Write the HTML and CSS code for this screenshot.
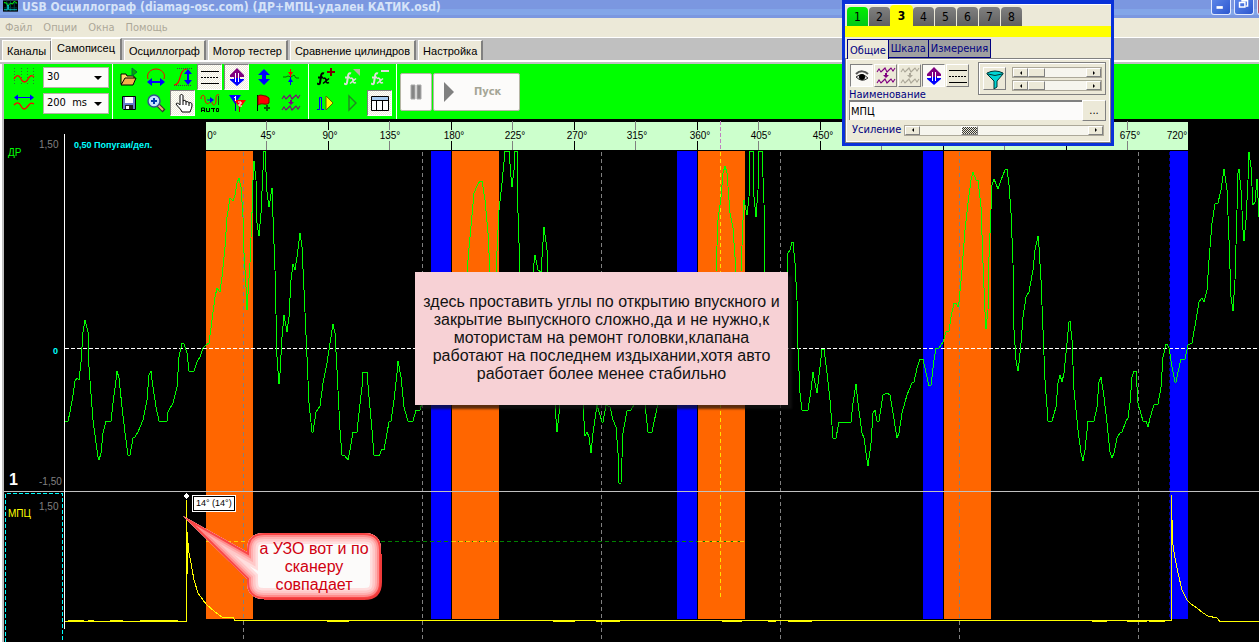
FILE: index.html
```html
<!DOCTYPE html>
<html lang="ru">
<head>
<meta charset="utf-8">
<title>USB Осциллограф</title>
<link rel="stylesheet" href="styles.css">
</head>
<body>
<svg class="defs" aria-hidden="true">
  <symbol id="wave-pair" viewBox="0 0 20 18">
    <path d="M1 5l2-3 2 3 2-2 2-2 2 4 2-2 2-2 2 3 2-3M1 16l2-3 2 3 2-2 2-2 2 4 2-2 2-2 2 3 2-3" fill="none" stroke="currentColor" stroke-width="1.1"/>
    <path d="M9 6h2v2h2l-3 3-3-3h2z" fill="currentColor"/>
  </symbol>
  <symbol id="updown-two" viewBox="0 0 20 20">
    <path d="M10 1l7 7v2h-4v1H7v-1H3V8z" fill="#800080"/>
    <path d="M7 11h6v1h4v1l-7 6-7-6v-1h4z" fill="#0000ff"/>
    <path d="M8.500 6v9M11.500 6v9" stroke="#fff"/>
  </symbol>
  <symbol id="levels" viewBox="0 0 20 20">
    <path d="M1 4.500h18M1 16.500h18" stroke="#000"/>
    <path d="M1 10.500h18" stroke="#000" stroke-dasharray="2 1"/>
  </symbol>
  <symbol id="fx" viewBox="0 0 14 14">
    <path d="M7 2c-2-1-3 1-3 3L3 11c0 2-1 2-3 1M1 6h5" fill="none" stroke="currentColor" stroke-width="2"/>
    <path d="M6 7c2-1 3 0 3 2s1 3 3 2M12 7L6 12" fill="none" stroke="currentColor" stroke-width="1.6"/>
  </symbol>
</svg>

<header class="titlebar">
  <svg class="app-icon" viewBox="0 0 16 12"><path d="M0 0h16v12H0z"/><path d="M1 3h14M1 8h14M4 0v11M8 0v11M12 0v11" stroke="#044"/><path d="M1 2l3 1 1 3 3-3 2 1 2-3 3 2" fill="none" stroke="#0f0"/><path d="M1 10h4V5h1v5h9" fill="none" stroke="#0cc"/></svg>
  <h1 class="title">USB Осциллограф (diamag-osc.com) (ДР+МПЦ-удален КАТИК.osd)</h1>
  <div class="window-controls">
    <button class="win-btn" aria-label="Свернуть"><svg viewBox="0 0 20 16"><path d="M5 7h7v3H5z" fill="#fff"/></svg></button>
    <button class="win-btn" aria-label="Восстановить"><svg viewBox="0 0 20 16"><path d="M5 3h6v5H5zM7 1h7v6h-2" fill="none" stroke="#fff" stroke-width="1.6"/></svg></button>
    <button class="win-btn win-close" aria-label="Закрыть"></button>
  </div>
</header>

<nav class="menubar">
  <button>Файл</button><button>Опции</button><button>Окна</button><button>Помощь</button>
</nav>

<div class="tabs" role="tablist">
  <button role="tab">Каналы</button>
  <button role="tab" class="selected" aria-selected="true">Самописец</button>
  <button role="tab">Осциллограф</button>
  <button role="tab">Мотор тестер</button>
  <button role="tab">Сравнение цилиндров</button>
  <button role="tab">Настройка</button>
</div>

<section class="toolbar">
  <div class="scales">
    <svg viewBox="0 0 24 20" width="24" height="20"><path d="M2.500 1v18M9.500 1v18M15.500 1v18M21.500 1v18" stroke="#2c7a2c" stroke-dasharray="1 2"/><path d="M2 12c3-5 5-4 7 0s5 4 7 0 4-4 6-2" fill="none" stroke="#f00" stroke-width="1.3"/></svg>
    <span class="combo"><select aria-label="Масштаб"><option>30</option></select></span>
    <svg viewBox="0 0 24 20" width="24" height="20"><path d="M3 4.500h18" stroke="#00f"/><path d="M6 1.500l-4 3 4 3zM18 1.500l4 3-4 3z" fill="#00f"/><path d="M2 12c3-3 5-3 7 1s4 4 7 0 4-3 6-2" fill="none" stroke="#f00" stroke-width="1.3"/></svg>
    <span class="combo"><select aria-label="Развёртка"><option>200&nbsp; ms</option></select></span>
  </div>
  <div class="tools tools-main">
    <button aria-label="Открыть"><svg viewBox="0 0 20 20"><path d="M2 17V7h5l1 2h7v3H7z" fill="#ffd76a" stroke="#000"/><path d="M2 18l4-7h11l-3 7z" fill="#f5b04c" stroke="#000"/><path d="M13 1l5 4-5 4z" fill="#0a0" stroke="#064"/></svg></button>
    <button aria-label="Горизонтальный размах"><svg viewBox="0 0 20 20"><path d="M2 12C0 6 5 2 10 2s10 4 8 10" fill="none" stroke="#f00"/><path d="M3 15h14" stroke="#00f" stroke-width="2"/><path d="M6 11l-5 4 5 4zM14 11l5 4-5 4z" fill="#00f"/></svg></button>
    <button aria-label="Вертикальный размах"><svg viewBox="0 0 20 20"><path d="M1 18c8 0 4-16 13-16" fill="none" stroke="#f00" stroke-width="1.2"/><path d="M4 1.500h16M1 18.500h18" stroke="#444" stroke-dasharray="1 1"/><path d="M15 5v10" stroke="#00f" stroke-width="2"/><path d="M11 7l4-5 4 5zM11 13l4 5 4-5z" fill="#00f"/></svg></button>
    <button class="on" aria-label="Уровни"><svg><use href="#levels"/></svg></button>
    <button class="on" aria-label="Смещение"><svg><use href="#updown-two"/></svg></button>
    <button aria-label="Вверх вниз"><svg viewBox="0 0 20 20"><path d="M10 2l6 6h-4v4h4l-6 6-6-6h4V8H4z" fill="#00f"/></svg></button>
    <button aria-label="Сжать"><svg viewBox="0 0 20 20"><path d="M2 10h3l2-1 3 1 3-2 2 3h3" fill="none" stroke="#086808"/><path d="M9.500 2v8" stroke="#f00"/><path d="M9.500 10v8" stroke="#00f"/><path d="M7 5h5l-2.500 4z" fill="#f00"/><path d="M7 15h5l-2.500-4z" fill="#00f"/></svg></button>
    <button aria-label="Сохранить"><svg viewBox="0 0 20 20"><path d="M3.500 3.500h13v13h-12l-1-1z" fill="#667dcc" stroke="#000"/><path d="M6 4h8v6H6z" fill="#fff"/><path d="M6 12h8v4H6z" fill="#222"/><path d="M7 13h3v3H7z" fill="#fff"/></svg></button>
    <button aria-label="Увеличить"><svg viewBox="0 0 20 20"><path d="M12 12l6 6" stroke="#333" stroke-width="4"/><path d="M12 12l5 5" stroke="#e8ae74" stroke-width="2"/><circle cx="8" cy="8" r="6" fill="#c8e6ff" stroke="#33528e" stroke-width="1.5"/><path d="M8 5v6M5 8h6" stroke="#003cae" stroke-width="2"/></svg></button>
    <button class="on" aria-label="Рука"><svg viewBox="0 0 20 20"><path d="M7 12V3c0-2 3-2 3 0v5c1-1 3-1 3 1 1-1 3 0 3 1 2-1 3 0 3 2 0 3-1 4-2 7H9c-1-3-4-5-6-8 1-2 3 0 4 1zM10 8v4M13 9v3M16 10v3" fill="#fff" stroke="#000"/></svg></button>
    <button aria-label="Авто"><svg viewBox="0 0 20 20"><path d="M1 6c0-5 4-5 4 0s3 6 5 3M12 9c0 4 4 4 4-1s0-7 3-6" fill="none" stroke="#f00"/><path d="M7 7h4" stroke="#00f"/><path d="M18.500 3v9" stroke="#075f07"/><path d="M10 4l4 3-4 3z" fill="#00f"/><path d="M1.500 19v-4h3v4M2 17.500h2M6.500 15v3.500h3V15M11 15.500h4M13.500 15v4M16.500 15.500h2v3h-2z" fill="none" stroke="#000"/></svg></button>
    <button aria-label="Маркеры 1 и 2"><svg viewBox="0 0 20 20"><path d="M2 2h12L8 11z" fill="#00f"/><path d="M7 7h12l-6 8z" fill="#f00"/><path d="M8.500 10v8" stroke="#00a"/><path d="M12.500 13v6" stroke="#a00"/><path d="M8.500 3v5M7 4.500h1M11 9h3v2h-2v2h3" fill="none" stroke="#fff"/></svg></button>
    <button aria-label="Добавить метку"><svg viewBox="0 0 20 20"><path d="M3.500 2v16" stroke="#000"/><path d="M4 3c3-2 5 0 8 0l3 2v5c-4 3-6-1-11 2z" fill="#f00" stroke="#700"/><path d="M13 12v6M10 15h6" stroke="#075f07" stroke-width="2"/></svg></button>
    <button class="purple" aria-label="Наложить"><svg><use href="#wave-pair"/></svg></button>
  </div>
  <div class="tools tools-fx">
    <button aria-label="Добавить функцию"><svg viewBox="0 0 20 20"><use href="#fx" x="1" y="4" width="14" height="15"/><path d="M15 1v8M11 5h8" stroke="#700" stroke-width="2"/></svg></button>
    <button class="off" aria-label="Изменить функцию"><svg viewBox="0 0 20 20"><use href="#fx" x="1" y="4" width="14" height="15"/><path d="M10 2h7v7z" fill="#b5b5a4"/></svg></button>
    <button class="off" aria-label="Удалить функцию"><svg viewBox="0 0 20 20"><use href="#fx" x="1" y="4" width="14" height="15"/><path d="M11 4h8" stroke="#dededa" stroke-width="2"/></svg></button>
    <button aria-label="К началу"><svg viewBox="0 0 20 20"><path d="M1 16.500h2.500v-12h2v12H8" fill="none" stroke="#00f"/><path d="M10 3l7 7-7 7z" fill="#ff0" stroke="#660"/></svg></button>
    <button aria-label="Воспроизвести"><svg viewBox="0 0 20 20"><path d="M6 3l7 7-7 7z" fill="none" stroke="#228722" stroke-width="1.4"/></svg></button>
    <button class="on" aria-label="Таблица"><svg viewBox="0 0 20 20"><path d="M1.500 3.500h17v14h-17z" fill="#fff" stroke="#000"/><path d="M2 4h16v3H2z" fill="#a5caef"/><path d="M1 7.500h18M6.500 7v10M12.500 7v10" stroke="#000"/></svg></button>
  </div>
  <div class="run">
    <button class="pause" aria-label="Пауза"><svg viewBox="0 0 12 16" width="12" height="16"><path d="M1 1h4v14H1zM7 1h4v14H7z" fill="#858585" stroke="#aaa"/></svg></button>
    <button class="start"><svg viewBox="0 0 12 20" width="12" height="20"><path d="M1 0l10 10L1 20z" fill="#808080"/></svg><span>Пуск</span></button>
  </div>
</section>

<main class="plot">
  <svg class="scope">
    <g transform="translate(-4 -119)" shape-rendering="crispEdges">
      <path d="M206 122h982v28H206z" fill="#ccffcc"/>
      <path d="M206 151h47v468h-47zM452 151h47v468h-47zM698 151h47v468h-47zM944 151h47v468h-47z" fill="#ff6600"/>
      <path d="M431 151h20v468h-20zM677 151h20v468h-20zM923 151h20v468h-20zM1170 151h18v468h-18z" fill="#0000ff"/>
      <path d="M328.500 122v8m0 11v9M451.500 122v8m0 11v9M574.500 122v8m0 11v9M697.500 122v8m0 11v9M820.500 122v8m0 11v9M943.500 122v28M1066.500 122v28" stroke="#000"/>
      <path d="M266.500 121v9m0 11v9M389.500 121v9m0 11v9M512.500 121v9m0 11v9M635.500 121v9m0 11v9M758.500 121v9m0 11v9M881.500 121v29M1004.500 121v29M1127.500 121v9m0 11v9" stroke="#808080"/>
      <path d="M243.500 152v490M422.500 152v490M601.500 152v490M780.500 152v490M959.500 152v490M1138.500 152v490" stroke="#808080" stroke-dasharray="4 3"/>
      <path d="M1169.500 152v467" stroke="#0000a0" stroke-dasharray="3 3"/>
      <path d="M65 348.500h1900" stroke="#fff" stroke-dasharray="4 2"/>
      <path d="M206 541.500h539" stroke="#008000" stroke-dasharray="4 3"/>
      <path d="M206 541.500h47M452 541.500h47M698 541.500h47" stroke="#ffcc00" stroke-dasharray="4 3"/>
      <path d="M720.500 121v29" stroke="#c080c0" stroke-dasharray="4 2"/>
      <path d="M720.500 152v448" stroke="#ffe000" stroke-dasharray="4 3"/>
      <path d="M4 491.500h1961" stroke="#c0c0c0"/>
      <path d="M64.500 134v495" stroke="#fff"/>
      <path d="M5.500 642V493.500h57V642" fill="none" stroke="#00ffff" stroke-dasharray="4 2"/>
      <polyline fill="none" stroke="#00ff00" points="65,421 68,421 70,412 73,395 75,381 77,378 79,380 81,362 83,332 85,320 88,332 89,367 93,420 96,443 98,457 99,460 101,453 103,433 106,421 111,421 113,403 116,380 117,371 119,378 122,407 125,433 128,455 130,455 133,438 135,437 138,432 143,420 147,400 149,375 151,371 152,380 156,407 159,421 167,421 168,412 173,403 177,387 179,357 182,343 184,344 187,353 189,371 194,371 197,362 200,357 203,348 206,345 209,343 212,320 215,297 217,288 220,292 222,277 225,247 227,217 230,198 233,201 235,195 237,183 239,178 241,187 243,217 244,253 246,287 247,310 250,263 252,213 253,180 254,161 256,180 257,223 259,236 261,213 263,170 264,151 265,151 267,192 269,207 272,188 273,217 275,270 277,357 279,384 280,373 282,337 284,315 287,332 289,317 291,280 293,264 295,270 297,257 300,233 302,247 304,290 307,357 309,403 312,432 313,432 316,412 320,406 323,383 327,363 330,343 333,324 335,333 337,370 340,430 342,455 345,456 348,460 350,450 353,432 357,432 359,413 362,387 363,372 367,372 369,397 372,430 374,455 379,456 382,449 384,450 389,422 391,421 394,400 397,373 398,361 401,377 404,407 408,421 413,421 416,410 420,410 422,403 440,350 462,300 467,272 470,237 474,193 477,186 480,181 482,181 485,200 488,233 490,272 493,300 496,272 499,210 502,183 505,151 509,151 511,177 512,187 514,170 515,151 517,151 518,213 520,272 526,330 533,272 535,255 538,270 541,272 544,227 547,250 548,272 555,405 557,432 560,405 570,360 583,405 585,436 587,432 589,437 591,453 593,433 597,405 602,422 603,422 606,405 610,407 613,420 616,427 618,453 619,483 621,483 623,433 627,411 631,410 634,405 640,370 645,405 648,432 652,432 657,408 670,360 700,320 716,272 718,220 721,197 723,173 725,166 727,173 730,213 733,228 736,272 739,305 741,272 743,220 744,200 747,215 749,197 750,151 753,151 754,197 756,217 758,190 759,151 762,151 764,203 765,272 775,350 787,272 788,253 790,250 792,242 793,242 795,263 797,300 798,348 800,393 802,410 808,410 811,390 813,372 815,383 817,393 820,367 822,349 824,349 827,373 830,400 833,438 836,438 839,422 851,422 853,403 856,384 858,403 862,433 864,438 867,460 868,466 871,443 873,413 875,410 877,421 879,421 883,395 887,393 890,395 893,413 897,438 899,433 902,413 907,395 912,383 914,382 917,368 920,359 923,359 926,373 929,386 931,385 934,360 936,348 939,348 943,342 946,332 949,331 951,317 954,303 956,303 958,307 959,302 962,270 965,230 968,203 971,180 973,172 976,180 978,180 981,207 983,263 985,312 986,329 988,310 989,257 991,210 992,185 994,179 998,189 1001,180 1003,175 1005,170 1007,169 1009,185 1011,213 1013,263 1014,330 1016,360 1018,371 1019,363 1021,343 1023,317 1026,297 1029,292 1033,270 1035,250 1038,236 1039,247 1041,280 1043,330 1045,380 1047,407 1048,421 1052,421 1056,407 1058,383 1060,375 1062,382 1064,373 1067,343 1069,322 1070,321 1072,340 1074,390 1078,430 1081,453 1083,461 1085,450 1088,421 1094,421 1097,407 1099,382 1101,377 1104,397 1107,423 1110,452 1112,458 1114,453 1117,438 1120,433 1122,432 1126,421 1128,418 1130,403 1132,377 1134,371 1136,371 1138,403 1143,421 1146,421 1148,427 1150,418 1154,405 1158,404 1161,387 1163,357 1166,344 1167,344 1169,348 1172,367 1175,382 1176,382 1178,372 1181,359 1185,359 1188,345 1192,343 1196,320 1199,302 1202,298 1204,302 1207,290 1209,260 1212,223 1215,204 1218,203 1221,190 1224,169 1227,190 1229,240 1231,297 1233,311 1235,280 1237,210 1238,173 1239,169 1241,190 1243,230 1244,241 1246,220 1248,180 1249,152 1251,167 1253,205 1255,202 1257,179 1259,217"/>
      <path d="M65 621.500h121V500M187.500 532v42M187 532l2 21 2 10 3 17 4 13 5 7 3 4 9 8 7 5h11l2 3.500h936V495M1171.500 520v50M1172 520l1 25 2 13 3 15 4 17 5 10 4 4 6 4 6 5 5 3 9 2 3 3.500h745" fill="none" stroke="#ffff00"/>
      <path d="M68 620.500h16M88 620.500h6M110 620.500h13M140 620.500h38M327 620.500h22M553 620.500h22M596 620.500h24M722 620.500h20M768 620.500h8M788 620.500h24M1092 620.500h15M1127 620.500h20M1149 620.500h16" stroke="#ffff00" stroke-width="2"/>
      <path d="M186 493l3 3-3 3-3-3z" fill="#fff"/>
    </g>
    <g class="angles" transform="translate(-4 -119)" text-anchor="middle">
      <text x="212" y="139">0°</text><text x="268" y="139">45°</text><text x="330" y="139">90°</text><text x="390" y="139">135°</text><text x="454" y="139">180°</text><text x="515" y="139">225°</text><text x="577" y="139">270°</text><text x="637" y="139">315°</text><text x="700" y="139">360°</text><text x="761" y="139">405°</text><text x="823" y="139">450°</text><text x="1130" y="139">675°</text><text x="1177" y="139">720°</text>
    </g>
    <g class="labels" transform="translate(-4 -119)">
      <text class="green" x="8" y="156">ДР</text>
      <text class="gray" x="39" y="148">1,50</text>
      <text class="cyan" x="74" y="148">0,50 Попугаи/дел.</text>
      <text class="cyan" x="53" y="354">0</text>
      <text class="channel" x="9" y="485">1</text>
      <text class="gray" x="39" y="485">-1,50</text>
      <text class="gray" x="39" y="510">1,50</text>
      <text class="yellow" x="8" y="517">МПЦ</text>
    </g>
  </svg>
  <div class="marker">14° (14°)</div>
  <div class="note">здесь проставить углы по открытию впускного и<br>закрытие выпускного сложно,да и не нужно,к<br>мотористам на ремонт головки,клапана<br>работают на последнем издыхании,хотя авто<br>работает более менее стабильно</div>
  <div class="callout">
    <svg viewBox="0 0 204 90">
      <clipPath id="bubble"><path id="bubble-path" d="M2 2l64 36V36q0-17 17-17h100q17 0 17 17v32q0 17-17 17H83q-17 0-17-17v-3z"/></clipPath>
      <g clip-path="url(#bubble)" fill="none">
        <use href="#bubble-path" fill="#fcfbfa"/>
        <use href="#bubble-path" stroke="#ffdede" stroke-width="22"/>
        <use href="#bubble-path" stroke="#ffc8c8" stroke-width="17"/>
        <use href="#bubble-path" stroke="#ffb0b0" stroke-width="12"/>
        <use href="#bubble-path" stroke="#ff8c8c" stroke-width="8"/>
        <use href="#bubble-path" stroke="#f94646" stroke-width="4"/>
      </g>
      <path d="M200 40v28q0 17-17 17H83" fill="none" stroke="#f03a3a" stroke-width="2"/>
    </svg>
    <p>а УЗО вот и по<br>сканеру<br>совпадает</p>
  </div>
</main>

<aside class="dialog">
  <div class="channels">
    <button class="ch ch-on">1</button><button class="ch">2</button><button class="ch ch-current">3</button><button class="ch">4</button><button class="ch">5</button><button class="ch">6</button><button class="ch">7</button><button class="ch">8</button>
  </div>
  <div class="stripe"></div>
  <div class="subtabs" role="tablist">
    <button role="tab" class="selected" aria-selected="true">Общие</button><button role="tab">Шкала</button><button role="tab">Измерения</button>
  </div>
  <div class="panel">
    <div class="panel-row">
      <div class="panel-tools">
        <button class="pressed" aria-label="Показать"><svg viewBox="0 0 20 20"><path d="M4 8c4-4 9-3 12 0" fill="none" stroke="#555" stroke-width="2"/><path d="M4 11q6-5 12 1-6 5-12-1z" fill="#ddd" stroke="#333"/><circle cx="10" cy="11" r="3"/></svg></button>
        <button class="purple" aria-label="Наложить"><svg><use href="#wave-pair"/></svg></button>
        <button class="muted" aria-label="Разделить"><svg><use href="#wave-pair"/></svg></button>
        <button class="pressed" aria-label="Смещение"><svg><use href="#updown-two"/></svg></button>
        <button aria-label="Уровни"><svg><use href="#levels"/></svg></button>
      </div>
      <div class="filter-box">
        <button aria-label="Фильтр"><svg viewBox="0 0 20 20"><path d="M2 4q8-4 16 0v1l-6 7v6l-3 2v-8L2 5z" fill="#00d5d5" stroke="#033"/><path d="M3 5q7 3 14 0" fill="none" stroke="#033"/></svg></button>
        <div class="filter-sliders">
          <div class="scroll"><button class="dec" aria-label="Меньше"></button><input type="range" value="0" aria-label="Нижняя частота"><button class="inc" aria-label="Больше"></button></div>
          <div class="scroll"><button class="dec" aria-label="Меньше"></button><input type="range" value="0" aria-label="Верхняя частота"><button class="inc" aria-label="Больше"></button></div>
        </div>
      </div>
    </div>
    <label for="name">Наименование</label>
    <div class="name-row"><input id="name" type="text" value="МПЦ"><button aria-label="Обзор">...</button></div>
    <div class="gain-row"><label for="gain">Усиление</label><div class="scroll gain"><button class="dec" aria-label="Меньше"></button><input id="gain" type="range" value="27"><button class="inc" aria-label="Больше"></button></div></div>
  </div>
</aside>
</body>
</html>
```
FILE: styles.css
```css
* { box-sizing: border-box; }
body {
  margin: 0;
  min-height: 100vh;
  display: flex;
  flex-direction: column;
  position: relative;
  overflow: hidden;
  background: #c0c0c0;
  font: 11px/14px "DejaVu Sans Condensed", sans-serif;
}
button, input, select { font: inherit; margin: 0; padding: 0; border: 0; border-radius: 0; color: inherit; background: none; }
button { display: flex; align-items: center; justify-content: center; }
.defs { position: absolute; width: 0; height: 0; }

.titlebar {
  display: flex;
  height: 18px;
  padding-left: 3px;
  gap: 4px;
  background: linear-gradient(#7b97e0 0 9px, #82a5e8 9px 15px, #7b97e0 15px);
}
.app-icon { width: 15px; height: 12px; }
.title {
  flex: 1;
  margin: 0;
  font: bold 12px/14px "DejaVu Sans Condensed", sans-serif;
  color: #d6e3f8;
  white-space: nowrap;
}
.window-controls { display: flex; gap: 3px; width: 48px; overflow: hidden; }
.win-btn {
  flex: none;
  width: 20px;
  height: 15px;
  border: 1px solid #dfe8ff;
  border-top: 0;
  border-radius: 0 0 3px 3px;
  background: linear-gradient(135deg, #5c85e8, #2c57cf);
}
.win-btn svg { width: 20px; height: 16px; }
.win-close { background: #b0556a; }

.menubar {
  display: flex;
  gap: 11px;
  height: 20px;
  padding-left: 5px;
  background: #ece9d8;
  border-bottom: 1px solid #fff;
  color: #aca899;
}

.tabs {
  display: flex;
  align-items: flex-end;
  gap: 2px;
  height: 26px;
  padding: 0 0 2px 2px;
  border-bottom: 2px solid #c0c0c0;
  box-shadow: inset 0 -2px #fff;
  font: 11px/14px "Liberation Sans", Arial, sans-serif;
}
.tabs button {
  height: 20px;
  padding: 0 4px;
  background: #ece9d8;
  border: 1px solid #fff;
  border-right: 2px solid #808080;
  border-bottom: 0;
  white-space: nowrap;
}
.tabs .selected { height: 22px; padding: 0 5px 3px; margin-left: -3px; }

.toolbar {
  display: flex;
  height: 55px;
  margin-left: 2px;
  border-left: 2px solid #c0c0c0;
  box-shadow: -2px 0 #fff;
  background: #00ff00;
}
.scales {
  display: grid;
  grid-template-columns: 24px 66px;
  grid-template-rows: 26px 26px;
  column-gap: 7px;
  align-items: center;
  width: 109px;
  padding-left: 8px;
  border-right: 1px solid #fff;
}
.combo { position: relative; display: block; }
.combo select {
  display: block;
  appearance: none;
  width: 100%;
  height: 21px;
  padding-left: 3px;
  border: 1px solid #b5b5a4;
  background: #fcfbfa;
  color: #000;
}
.combo::after {
  content: "";
  position: absolute;
  right: 7px;
  top: 9px;
  border: 4px solid transparent;
  border-top-color: #000;
  border-bottom: 0;
  pointer-events: none;
}
.tools { display: grid; grid-auto-rows: 26px; border-right: 1px solid #fff; height: 55px; }
.tools-main { grid-template-columns: repeat(7, 27px); padding: 0 4px 0 2px; }
.tools-fx { grid-template-columns: repeat(3, 27px); padding: 0 3px; }
.tools button { margin: 0 1px; }
.tools svg { width: 20px; height: 20px; }
.tools .on {
  border: 1px solid #808080;
  border-right-color: #fff;
  border-bottom-color: #fff;
  background: repeating-conic-gradient(#fff 0 25%, #ece9d8 0 50%) 0 0 / 2px 2px;
}
.tools .off { color: #dededa; }
.tools .purple, .purple { color: #800080; }
.muted { color: #aca899; }
.run { display: flex; align-items: center; gap: 1px; padding-left: 3px; }
.run button {
  height: 38px;
  border: 1px solid #b5b5a4;
  border-radius: 2px;
  background: #fcfbfa;
}
.run .pause { width: 32px; }
.run .start {
  width: 87px;
  padding-left: 9px;
  gap: 19px;
  justify-content: flex-start;
  color: #a5a596;
  font-weight: bold;
}

.plot {
  position: relative;
  flex: 1;
  min-height: 523px;
  margin-left: 2px;
  border-left: 2px solid #c0c0c0;
  box-shadow: -2px 0 #fff;
  background: #000;
}
.scope { position: absolute; inset: 0; width: 100%; height: 100%; }
.angles, .labels { font: 10px "Liberation Sans", Arial, sans-serif; }
.green { fill: #00ff00; }
.gray { fill: #808080; }
.yellow { fill: #ffff00; }
.cyan { fill: #00ffff; font-size: 9px; font-weight: bold; }
.channel { fill: #fff; font-size: 16px; font-weight: bold; }
.marker {
  position: absolute;
  left: 189px;
  top: 377px;
  padding: 0 2px;
  border: 1px solid #000;
  outline: 1px solid #fff;
  background: #fff;
  font: 9px/13px "Liberation Sans", Arial, sans-serif;
  white-space: nowrap;
}
.note {
  position: absolute;
  left: 411px;
  top: 153px;
  width: 373px;
  height: 133px;
  padding-top: 21px;
  background: #f7d1d5;
  box-shadow: 4px 4px 2px rgba(20, 20, 20, .7);
  color: #111;
  font: 16px/18px "Liberation Sans", Arial, sans-serif;
  text-align: center;
  white-space: nowrap;
}
.callout { position: absolute; left: 177px; top: 395px; width: 204px; height: 90px; }
.callout svg { display: block; width: 204px; height: 90px; }
.callout p {
  position: absolute;
  left: 66px;
  right: 4px;
  top: 26px;
  margin: 0;
  color: #d00010;
  font: 16px/18px "Liberation Sans", Arial, sans-serif;
  text-align: center;
  white-space: nowrap;
}

.dialog {
  position: absolute;
  left: 842px;
  top: 0;
  width: 272px;
  border: 3px solid #0831d9;
  border-top-width: 4px;
  background: #ece9d8;
  box-shadow: inset 0 1px #fff;
}
.channels { display: flex; align-items: flex-end; gap: 1px; height: 22px; padding-left: 2px; }
.ch {
  width: 21px;
  height: 19px;
  border-radius: 4px 4px 0 0;
  background: linear-gradient(#808080, #606060);
  color: #000;
  font-size: 12px;
}
.ch-on { background: linear-gradient(#00f000, #00c818); }
.ch-current { width: 23px; height: 21px; margin: 0 -1px; background: #ff0; font-weight: bold; }
.stripe { height: 11px; background: #ff0; }
.subtabs { display: flex; padding: 2px 0 0 2px; height: 21px; color: #000080; }
.subtabs button { height: 19px; padding: 0 2px; margin-right: -1px; border: 1px solid #000080; background: #a0a0a0; }
.subtabs .selected { background: #ece9d8; border-bottom: 0; padding-top: 2px; height: 20px; position: relative; z-index: 1; }
.panel { border: 1px solid #808080; box-shadow: inset 0 0 0 1px #fff; padding: 3px 4px 2px 3px; height: 85px; color: #000080; }
.panel-row { display: flex; justify-content: space-between; }
.panel-tools { display: flex; gap: 1px; padding: 2px 0 0 1px; }
.panel-tools button, .filter-box > button {
  flex: none;
  width: 23px;
  height: 23px;
  border: 1px solid #fff;
  border-right-color: #808080;
  border-bottom-color: #808080;
}
.panel-tools svg, .filter-box svg { width: 20px; height: 20px; }
.panel-tools .pressed { border-color: #808080 #fff #fff #808080; background: #faf9f5; }
.filter-box { display: flex; gap: 6px; width: 128px; height: 33px; padding: 4px 3px 0 4px; border: 1px solid #808080; box-shadow: inset 1px 1px #fff; }
.filter-sliders { display: flex; flex-direction: column; gap: 2px; flex: 1; min-width: 0; }
.scroll { display: flex; height: 11px; border: 1px solid #aca899; background: #f6f5ee; }
.scroll button { width: 15px; height: 9px; border: 1px solid #fff; border-right-color: #808080; border-bottom-color: #808080; background: #ece9d8; flex: none; }
.scroll .dec::before, .scroll .inc::before { content: ""; border: 2px solid transparent; }
.scroll .dec::before { border-right-color: #000; border-left: 0; }
.scroll .inc::before { border-left-color: #000; border-right: 0; }
.scroll input { appearance: none; flex: 1; width: 0; min-width: 0; height: 9px; background: transparent; }
.scroll input::-webkit-slider-thumb {
  appearance: none;
  width: 17px;
  height: 9px;
  border: 1px solid #fff;
  border-right-color: #808080;
  border-bottom-color: #808080;
  background: #ece9d8;
}
.scroll.gain { width: 200px; }
.gain input::-webkit-slider-thumb { background: repeating-conic-gradient(#333 0 25%, #ece9d8 0 50%) 0 0 / 2px 2px; }
.panel > label { display: block; line-height: 10px; height: 6px; margin-top: -5px; }
.name-row { display: flex; margin-top: 4px; height: 21px; color: #000; }
.name-row input { flex: 1; min-width: 0; height: 20px; padding-left: 1px; border-top: 2px solid #808080; border-left: 1px solid #808080; background: #fcfbfa; }
.name-row button { width: 24px; border: 1px solid #fff; border-right-color: #808080; border-bottom-color: #808080; }
.gain-row { display: flex; align-items: center; justify-content: space-between; padding: 2px 2px 0 3px; height: 16px; }
```
